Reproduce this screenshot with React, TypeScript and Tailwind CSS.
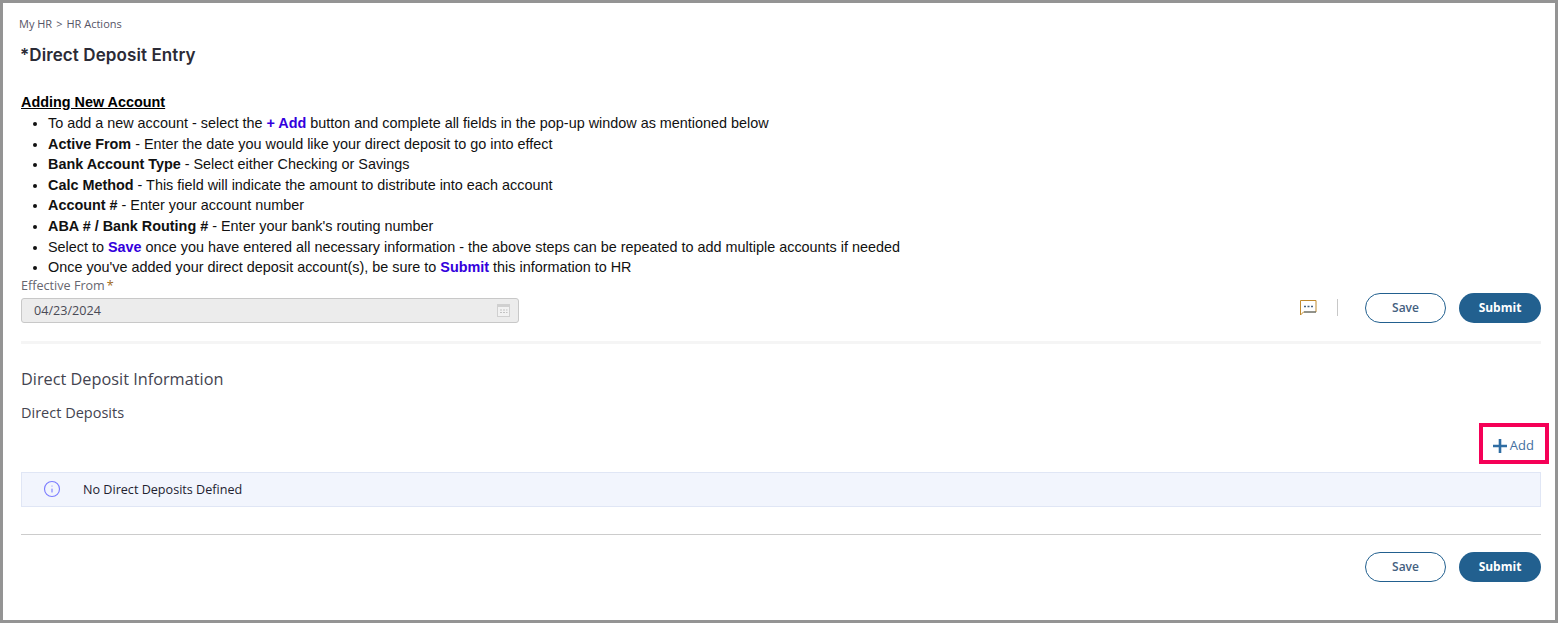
import React from 'react';
import { Info } from 'lucide-react';

const openSans = 'font-["Open_Sans",sans-serif]';

function Blue({ children }: { children: React.ReactNode }) {
  return <strong className="font-bold text-[#3300dd]">{children}</strong>;
}

function Buttons() {
  return (
    <div className="flex items-center gap-[13px]">
      <button className="h-[30px] w-[81px] rounded-full border border-[#22608f] bg-white text-[12px] font-semibold text-[#44607f]">Save</button>
      <button className="h-[30px] w-[82px] rounded-full bg-[#22608f] text-[12px] font-bold text-white">Submit</button>
    </div>
  );
}

function CalendarIcon() {
  return (
    <svg width="13" height="13" viewBox="0 0 13 13" fill="none">
      <rect x="0.5" y="0.5" width="12" height="12" fill="#f2f2f2" stroke="#d0d0d0" />
      <rect x="0" y="0" width="13" height="3" fill="#d0d0d0" />
      <path d="M3 6h2M6 6h2M9 6h1.5M3 8.5h2M6 8.5h2M9 8.5h1.5" stroke="#c2c2c2" />
    </svg>
  );
}

function CommentIcon() {
  return (
    <svg width="17" height="16" viewBox="0 0 17 16" fill="none">
      <path d="M0.5 15V0.5H16V12H3.5L0.5 15Z" fill="white" stroke="#c08a2e" />
      <path d="M4 6.5h2M7.5 6.5h2M11 6.5h2" stroke="#44607f" strokeWidth="1.4" />
      <path d="M4 12h12" stroke="#44607f" />
    </svg>
  );
}

function PlusIcon() {
  return (
    <svg width="14" height="14" viewBox="0 0 14 14">
      <path d="M7 0v14M0 7h14" stroke="#2f6da3" strokeWidth="2.6" />
    </svg>
  );
}

export default function App() {
  return (
    <div className={`relative h-[623px] w-[1558px] border-[3px] border-[#949494] bg-white ${openSans}`}>
      <div className="pl-[18px] pr-[14px]">
        <div className="pt-[13px] text-[11px] leading-[16px] text-[#555566]">
          <span className="-ml-[2px]">My HR</span>
          <span className="mx-[4px]">&gt;</span>
          <span>HR Actions</span>
        </div>

        <h1 className='mt-[11px] -ml-[1px] font-["Inter",sans-serif] text-[17px] leading-[24px] font-semibold tracking-[0.1px] text-[#2b2b36]'>*Direct Deposit Entry</h1>

        <div className='mt-[24px] font-["Liberation_Sans",Arial,sans-serif] text-[14.4px] text-[#111111]'>
          <div className="leading-[22px] font-bold text-black underline">Adding New Account</div>
          <ul className="list-disc pl-[27px] leading-[20.6px]">
            <li>To add a new account - select the <Blue>+ Add</Blue> button and complete all fields in the pop-up window as mentioned below</li>
            <li><b>Active From</b> - Enter the date you would like your direct deposit to go into effect</li>
            <li><b>Bank Account Type</b> - Select either Checking or Savings</li>
            <li><b>Calc Method</b> - This field will indicate the amount to distribute into each account</li>
            <li><b>Account #</b> - Enter your account number</li>
            <li><b>ABA # / Bank Routing #</b> - Enter your bank's routing number</li>
            <li>Select to <Blue>Save</Blue> once you have entered all necessary information - the above steps can be repeated to add multiple accounts if needed</li>
            <li>Once you've added your direct deposit account(s), be sure to <Blue>Submit</Blue> this information to HR</li>
          </ul>
        </div>

        <div className="flex items-end justify-between">
          <div>
            <div className="text-[12.6px] leading-[16px] text-[#66666f]">Effective From<span className="ml-[2px] text-[#a06a20]">*</span></div>
            <div className="mt-[4px] flex h-[25px] w-[498px] items-center justify-between rounded-[3px] border border-[#c8c8c8] bg-[#ececec] pl-[12px] pr-[8px] text-[12.6px] text-[#4a4a55]">
              <span className="pt-[2px]">04/23/2024</span>
              <CalendarIcon />
            </div>
          </div>
          <div className="flex items-center">
            <CommentIcon />
            <div className="mx-[20px] h-[17px] w-px bg-[#c8c8c8]" />
            <div className="ml-[7px]"><Buttons /></div>
          </div>
        </div>

        <div className="mt-[18px] h-[3px] bg-[#f5f5f5]" />

        <h2 className="mt-[24px] text-[16.3px] leading-[22px] text-[#444450]">Direct Deposit Information</h2>
        <h3 className="mt-[13px] text-[14.5px] leading-[20px] text-[#444450]">Direct Deposits</h3>

        <div className="mt-[9px] flex h-[28px] items-center justify-end pr-[7px] text-[13px] text-[#44709f]">
          <PlusIcon />
          <span className="ml-[3px]">Add</span>
        </div>

        <div className="mt-[12px] flex h-[35px] items-center border border-[#e0e6f5] bg-[#f2f5fd] text-[12.6px] text-[#222230]">
          <Info size={18} strokeWidth={1.5} className="ml-[21px] text-[#7b7cff]" />
          <span className="ml-[22px] pt-[2px]">No Direct Deposits Defined</span>
        </div>

        <div className="mt-[27px] h-px bg-[#cccccc]" />

        <div className="mt-[17px] flex justify-end"><Buttons /></div>
      </div>

      <div className="absolute left-[1476px] top-[420px] h-[41px] w-[70px] border-4 border-[#f50057]" />
    </div>
  );
}
